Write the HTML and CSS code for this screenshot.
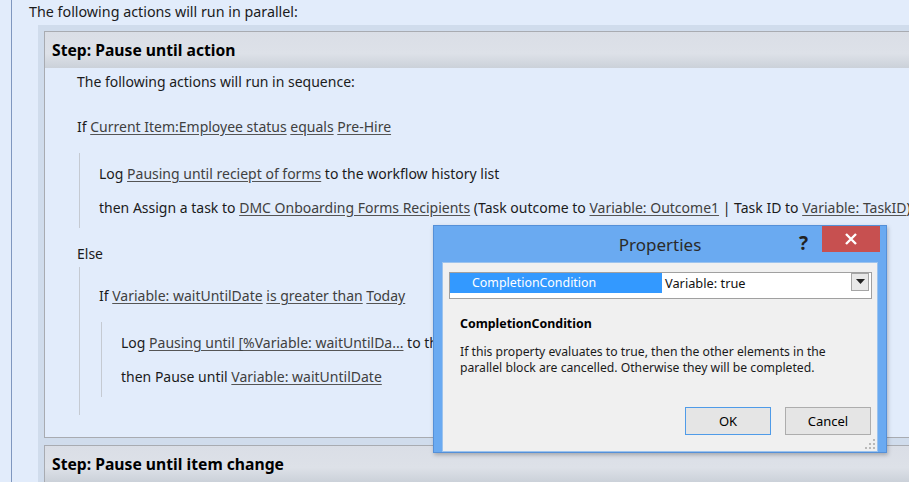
FILE: index.html
```html
<!DOCTYPE html>
<html>
<head>
<meta charset="utf-8">
<link rel="stylesheet" href="styles.css">
</head>
<body>
<div class="page">
  <div class="outer">
    <div class="par-title">The following actions will run in parallel:</div>
    <div class="parallel">
      <div class="step">
        <div class="step-head">Step: Pause until action</div>
        <div class="step-body">
          <div class="row first">The following actions will run in sequence:</div>
          <div class="row gap14">If <a>Current Item:Employee status</a> <a>equals</a> <a>Pre-Hire</a></div>
          <div class="block b1">
            <div class="row">Log <a>Pausing until reciept of forms</a> to the workflow history list</div>
            <div class="row">then Assign a task to <a>DMC Onboarding Forms Recipients</a> (Task outcome to <a>Variable: Outcome1</a> | Task ID to <a>Variable: TaskID</a>)</div>
          </div>
          <div class="row else">Else</div>
          <div class="block b2">
            <div class="row">If <a>Variable: waitUntilDate</a> <a>is greater than</a> <a>Today</a></div>
            <div class="block b3">
              <div class="row">Log <a>Pausing until [%Variable: waitUntilDa...</a> to the workflow history list</div>
              <div class="row">then Pause until <a>Variable: waitUntilDate</a></div>
            </div>
          </div>
        </div>
      </div>
      <div class="step second">
        <div class="step-head">Step: Pause until item change</div>
        <div class="step-body short"></div>
      </div>
    </div>
  </div>
</div>

<div class="dialog">
  <div class="titlebar">
    <span class="title">Properties</span>
    <span class="help">?</span>
    <span class="close"><svg width="14" height="12" viewBox="0 0 14 12"><path d="M2 1 L12 11 M12 1 L2 11" stroke="#fff" stroke-width="2.4" fill="none"/></svg></span>
  </div>
  <div class="client">
    <div class="grid">
      <div class="cells">
        <div class="cell-name">CompletionCondition</div>
        <div class="cell-value">Variable: true</div>
        <div class="dd"><svg width="9" height="5" viewBox="0 0 9 5"><path d="M0 0 H9 L4.5 5 Z" fill="#222"/></svg></div>
      </div>
    </div>
    <div class="desc-title">CompletionCondition</div>
    <div class="desc">If this property evaluates to true, then the other elements in the<br>parallel block are cancelled. Otherwise they will be completed.</div>
    <div class="buttons">
      <div class="btn ok">OK</div>
      <div class="btn">Cancel</div>
    </div>
    <svg class="grip" width="11" height="11" viewBox="0 0 11 11">
      <rect x="8" y="0" width="2" height="2" fill="#b9b9b9"/>
      <rect x="4" y="4" width="2" height="2" fill="#b9b9b9"/>
      <rect x="8" y="4" width="2" height="2" fill="#b9b9b9"/>
      <rect x="0" y="8" width="2" height="2" fill="#b9b9b9"/>
      <rect x="4" y="8" width="2" height="2" fill="#b9b9b9"/>
      <rect x="8" y="8" width="2" height="2" fill="#b9b9b9"/>
    </svg>
  </div>
</div>
</body>
</html>
```
FILE: styles.css
```css
html, body {
  margin: 0;
  padding: 0;
  height: 100%;
  overflow: hidden;
  background: #e2ecfb;
}
body {
  font-family: "Noto Sans", "Open Sans", sans-serif;
  color: #1b1b1b;
  position: relative;
}
.page {
  padding-left: 11px;
}
.outer {
  border-left: 1px solid #7f97bf;
  padding-left: 17px;
  min-height: 482px;
}
.par-title {
  height: 25px;
  line-height: 24px;
  font-size: 14.3px;
  white-space: nowrap;
}
.parallel {
  margin-left: 9px;
  background: #d0dcec;
  padding: 6px 0 0 6px;
  width: 1000px;
}
.step {
  border: 1px solid #a8abb1;
  border-right: none;
  background: #e2ecfb;
}
.step.second {
  margin-top: 7px;
}
.step-head {
  height: 36px;
  line-height: 36px;
  padding-left: 7px;
  font-weight: 700;
  font-size: 15.7px;
  color: #000;
  background: linear-gradient(#dadee6 0%, #dde1e8 60%, #cbd1d9 100%);
  white-space: nowrap;
}
.step-body {
  padding: 0 0 22px 32px;
  font-size: 14px;
}
.step-body.short {
  height: 20px;
  padding: 0;
}
.row {
  height: 34px;
  line-height: 34px;
  white-space: nowrap;
}
.row.first {
  height: 28px;
  line-height: 28px;
}
.row.gap14 {
  margin-top: 14px;
}
.row.else {
  margin-top: 13px;
  height: 26px;
  line-height: 26px;
}
.row a {
  color: #404040;
  text-decoration: underline;
  text-decoration-color: #555;
  text-underline-offset: 2px;
}
.block {
  margin-left: 2px;
  border-left: 1px solid #c5cad2;
  padding-left: 19px;
}
.block.b1 {
  margin-top: 9px;
  padding-top: 4px;
  padding-bottom: 3px;
}
.block.b2 {
  padding-top: 12px;
  padding-bottom: 18px;
}
.block.b3 {
  margin-top: 9px;
  padding-top: 4px;
  padding-bottom: 3px;
}

/* Dialog */
.dialog {
  position: absolute;
  left: 433px;
  top: 225px;
  width: 452px;
  height: 226px;
  background: #6aaaf1;
  border: 1px solid #5590d8;
  box-shadow: 1px 2px 4px rgba(0,0,0,0.25);
  display: flex;
  flex-direction: column;
}
.titlebar {
  height: 36px;
  position: relative;
  display: flex;
  justify-content: center;
  align-items: center;
}
.title {
  font-size: 17px;
  color: #2a2a2a;
  margin-top: 1px;
}
.help {
  position: absolute;
  left: 365px;
  top: 4px;
  font-size: 19px;
  font-weight: 700;
  color: #222;
}
.close {
  position: absolute;
  left: 388px;
  top: 0;
  width: 58px;
  height: 26px;
  background: #c75050;
  display: flex;
  justify-content: center;
  align-items: center;
}
.client {
  margin: 0 8px 0 8px;
  height: 182px;
  background: #f0f0f0;
  border: 1px solid #9cc3ee;
  position: relative;
  padding: 9px 5px 0 6px;
}
.grid {
  border: 1px solid #a0a0a0;
  background: #fff;
  height: 25px;
}
.cells {
  display: flex;
  height: 20px;
  align-items: stretch;
}
.cell-name {
  width: 190px;
  padding-left: 22px;
  background: #3399ff;
  color: #fff;
  font-size: 12.4px;
  line-height: 20px;
}
.cell-value {
  flex: 1;
  padding-left: 3px;
  font-size: 12.8px;
  line-height: 20px;
  color: #111;
}
.dd {
  width: 16px;
  height: 16px;
  margin: 0 2px 0 0;
  border: 1px solid #a5a5a5;
  background: #e8e8e8;
  display: flex;
  justify-content: center;
  align-items: center;
}
.desc-title {
  margin-top: 16px;
  padding-left: 11px;
  font-size: 12.4px;
  font-weight: 700;
  color: #000;
  line-height: 18px;
}
.desc {
  margin-top: 11px;
  padding-left: 11px;
  font-size: 12.2px;
  line-height: 16px;
  color: #1a1a1a;
}
.buttons {
  position: absolute;
  right: 6px;
  bottom: 16px;
  display: flex;
  gap: 14px;
}
.btn {
  width: 84px;
  height: 26px;
  border: 1px solid #adadad;
  background: #e5e5e5;
  font-size: 13px;
  line-height: 26px;
  text-align: center;
  color: #000;
}
.btn.ok {
  border-color: #4f9be8;
}
.grip {
  position: absolute;
  right: 1px;
  bottom: 1px;
}
```
